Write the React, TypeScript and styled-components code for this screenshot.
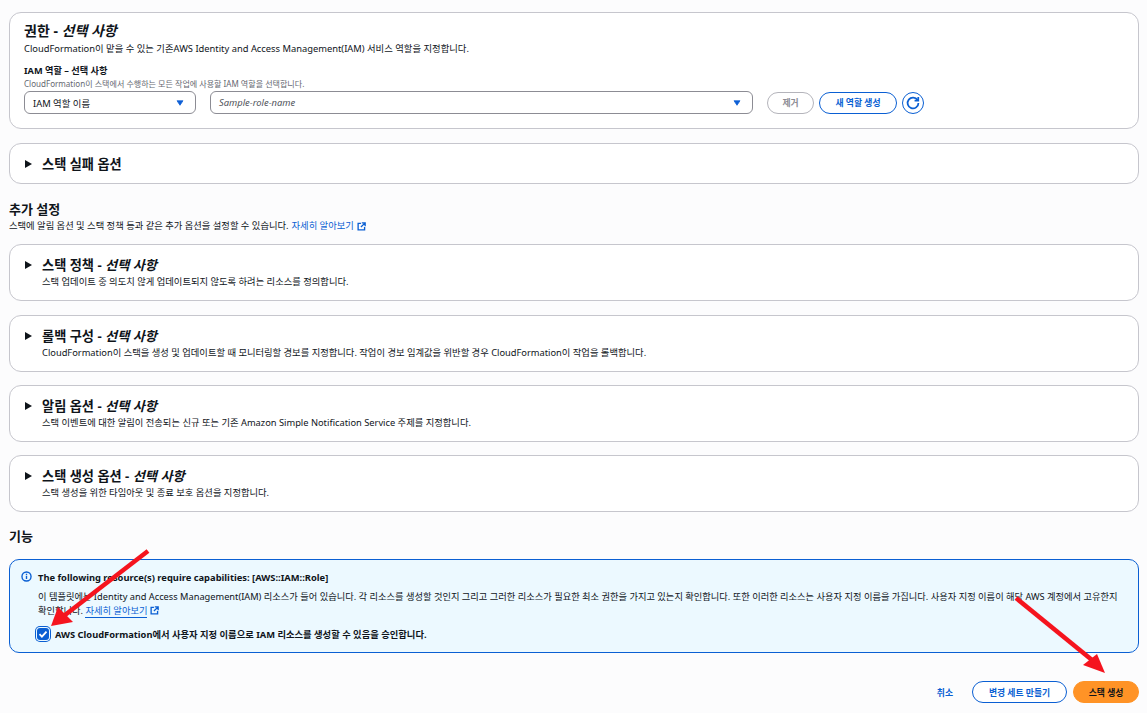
import { FunctionComponent } from "react";
import styled, { createGlobalStyle } from "styled-components";

const GlobalStyle = createGlobalStyle`
  html, body {
    margin: 0;
    padding: 0;
    background: #fcfcfd;
  }
  body {
    color: #0f141a;
    font-family: "Noto Sans", "Noto Sans CJK KR", sans-serif;
    font-size: 10px;
  }
`;

const Caret: FunctionComponent = () => (
  <CaretIcon viewBox="0 0 10 8">
    <path d="M1 1h8L5 7z" fill="#0d5fd6" stroke="#0d5fd6" strokeLinejoin="round" />
  </CaretIcon>
);

const ExternalIcon: FunctionComponent = () => (
  <LinkIcon viewBox="0 0 16 16" fill="none" stroke="#0a5fd3" strokeWidth="2.4">
    <path d="M7 2.5H2v11.5h11.5V9" />
    <path d="M8.5 1.5h6v6M14 2l-7 7" />
  </LinkIcon>
);

const ExpandRow: FunctionComponent<{
  title: string;
  description: string;
}> = ({ title, description }) => (
  <ExpandCard>
    <Triangle />
    <div>
      <ExpandTitle>
        {title} - <em>선택 사항</em>
      </ExpandTitle>
      <ExpandText>{description}</ExpandText>
    </div>
  </ExpandCard>
);

const App: FunctionComponent = () => (
  <Page>
    <GlobalStyle />
    <Card>
      <CardTitle>
        권한 - <em>선택 사항</em>
      </CardTitle>
      <CardText>
        CloudFormation이 맡을 수 있는 기존AWS Identity and Access Management(IAM) 서비스 역할을 지정합니다.
      </CardText>
      <FieldLabel>IAM 역할 – 선택 사항</FieldLabel>
      <FieldHint>CloudFormation이 스택에서 수행하는 모든 작업에 사용할 IAM 역할을 선택합니다.</FieldHint>
      <FieldRow>
        <SelectBox $width={172}>
          IAM 역할 이름
          <Caret />
        </SelectBox>
        <SelectBox $width={543} $placeholder>
          Sample-role-name
          <Caret />
        </SelectBox>
        <Buttons>
          <PillButton $variant="disabled" $width={47}>제거</PillButton>
          <PillButton $variant="normal" $width={78}>새 역할 생성</PillButton>
          <RefreshButton>
            <svg width="14" height="14" viewBox="0 0 16 16" fill="none" stroke="#0a5fd3" strokeWidth="2">
              <path d="M13.2 4.6A6.2 6.2 0 1 0 14.2 8" />
              <path d="M14 1v4.2H9.8" />
            </svg>
          </RefreshButton>
        </Buttons>
      </FieldRow>
    </Card>

    <FailureCard>
      <Triangle />
      <ExpandTitle>스택 실패 옵션</ExpandTitle>
    </FailureCard>

    <SectionHead>
      <SectionTitle>추가 설정</SectionTitle>
      <SectionText>
        스택에 알림 옵션 및 스택 정책 등과 같은 추가 옵션을 설정할 수 있습니다. <InlineLink>자세히 알아보기</InlineLink> <ExternalIcon />
      </SectionText>
    </SectionHead>

    <ExpandList>
      <ExpandRow title="스택 정책" description="스택 업데이트 중 의도치 않게 업데이트되지 않도록 하려는 리소스를 정의합니다." />
      <ExpandRow
        title="롤백 구성"
        description="CloudFormation이 스택을 생성 및 업데이트할 때 모니터링할 경보를 지정합니다. 작업이 경보 임계값을 위반할 경우 CloudFormation이 작업을 롤백합니다."
      />
      <ExpandRow
        title="알림 옵션"
        description="스택 이벤트에 대한 알림이 전송되는 신규 또는 기존 Amazon Simple Notification Service 주제를 지정합니다."
      />
      <ExpandRow title="스택 생성 옵션" description="스택 생성을 위한 타임아웃 및 종료 보호 옵션을 지정합니다." />
    </ExpandList>

    <CapabilityTitle>기능</CapabilityTitle>

    <Alert>
      <InfoIcon viewBox="0 0 16 16" fill="none" stroke="#0a5fd3" strokeWidth="2">
        <circle cx="8" cy="8" r="6.6" />
        <path d="M8 7v4.5M8 4v1.8" />
      </InfoIcon>
      <AlertBody>
        <AlertTitle>The following resource(s) require capabilities: [AWS::IAM::Role]</AlertTitle>
        <AlertText>
          이 템플릿에는 Identity and Access Management(IAM) 리소스가 들어 있습니다. 각 리소스를 생성할 것인지 그리고 그러한 리소스가 필요한 최소 권한을 가지고 있는지 확인합니다. 또한 이러한 리소스는 사용자 지정 이름을 가집니다. 사용자 지정 이름이 해당 AWS 계정에서 고유한지 확인합니다. <UnderLink>자세히 알아보기</UnderLink> <ExternalIcon />
        </AlertText>
        <CheckRow>
          <CheckBox>
            <svg width="10" height="10" viewBox="0 0 10 10" fill="none" stroke="#fff" strokeWidth="1.8">
              <path d="M1.5 5.2l2.4 2.4 4.6-5" />
            </svg>
          </CheckBox>
          AWS CloudFormation에서 사용자 지정 이름으로 IAM 리소스를 생성할 수 있음을 승인합니다.
        </CheckRow>
      </AlertBody>
    </Alert>

    <Footer>
      <CancelLink>취소</CancelLink>
      <PillButton $variant="normal" $width={95}>변경 세트 만들기</PillButton>
      <PillButton $variant="primary" $width={66}>스택 생성</PillButton>
    </Footer>

    <ArrowLayer viewBox="0 0 1147 713">
      <path d="M148 551L65 615" stroke="#f5141e" strokeWidth="4.5" />
      <path d="M51 626L73 622L58 607Z" fill="#f5141e" />
      <path d="M1016 598L1092 660" stroke="#f5141e" strokeWidth="4.5" />
      <path d="M1105 673L1083 665L1097 654Z" fill="#f5141e" />
    </ArrowLayer>
  </Page>
);

export default App;

const Page = styled.div`
  box-sizing: border-box;
  height: 713px;
  overflow: hidden;
  padding: 12px 8px 0 9px;
  position: relative;
  width: 1147px;
`;

const Card = styled.section`
  background: #fff;
  border: 1px solid #c6c6cd;
  border-radius: 12px;
  box-sizing: border-box;
  height: 117px;
  padding: 9px 14px;
`;

const CardTitle = styled.h2`
  font-size: 14px;
  font-weight: 700;
  line-height: 18px;
  margin: 0;
`;

const CardText = styled.p`
  font-size: 9.35px;
  line-height: 14px;
  margin: 2px 0 0;
`;

const FieldLabel = styled.div`
  font-size: 9.2px;
  font-weight: 700;
  line-height: 13px;
  margin-top: 8px;
`;

const FieldHint = styled.div`
  color: #656871;
  font-size: 8.05px;
  line-height: 12px;
  margin-top: 1px;
`;

const FieldRow = styled.div`
  align-items: center;
  display: flex;
  gap: 14px;
  margin-top: 1px;
`;

const SelectBox = styled.div<{ $width: number; $placeholder?: boolean }>`
  align-items: center;
  background: #fff;
  border: 1px solid #8c8c94;
  border-radius: 6px;
  box-sizing: border-box;
  color: ${(p) => (p.$placeholder ? "#4f535b" : "#0f141a")};
  display: flex;
  font-size: 9.4px;
  font-style: ${(p) => (p.$placeholder ? "italic" : "normal")};
  height: 23px;
  justify-content: space-between;
  padding: 0 11px 0 8px;
  width: ${(p) => p.$width}px;
`;

const CaretIcon = styled.svg`
  height: 6px;
  width: 8px;
`;

const Buttons = styled.div`
  align-items: center;
  display: flex;
  gap: 5px;
`;

const PillButton = styled.button<{ $variant: "normal" | "disabled" | "primary"; $width: number }>`
  background: ${(p) => (p.$variant === "primary" ? "#ff9326" : "#fff")};
  border: ${(p) =>
    p.$variant === "primary"
      ? "1px solid #ff9326"
      : p.$variant === "disabled"
        ? "1px solid #b4b4bb"
        : "1px solid #0a5fd3"};
  border-radius: 12px;
  box-sizing: border-box;
  color: ${(p) => (p.$variant === "primary" ? "#0f141a" : p.$variant === "disabled" ? "#8c8c94" : "#0a5fd3")};
  font-family: inherit;
  font-size: 8.8px;
  font-weight: 700;
  height: 22px;
  padding: 0;
  width: ${(p) => p.$width}px;
`;

const RefreshButton = styled.button`
  align-items: center;
  background: #fff;
  border: 1px solid #0a5fd3;
  border-radius: 50%;
  box-sizing: border-box;
  display: flex;
  height: 22px;
  justify-content: center;
  padding: 0;
  width: 22px;
`;

const ExpandCard = styled.div`
  background: #fff;
  border: 1px solid #c6c6cd;
  border-radius: 12px;
  box-sizing: border-box;
  display: flex;
  gap: 10px;
  height: 57px;
  padding: 11px 15px;
`;

const FailureCard = styled(ExpandCard)`
  align-items: center;
  height: 41px;
  margin-top: 14px;
  padding: 0 15px;
`;

const Triangle = styled.span`
  border-bottom: 4px solid transparent;
  border-left: 7px solid #0f141a;
  border-top: 4px solid transparent;
  flex: none;
  height: 0;
  margin-top: 5px;
  width: 0;
  ${FailureCard} & {
    margin-top: 0;
  }
`;

const ExpandTitle = styled.div`
  font-size: 13.2px;
  font-weight: 700;
  line-height: 18px;
`;

const ExpandText = styled.div`
  font-size: 9.3px;
  line-height: 14px;
  margin-top: 1px;
`;

const SectionHead = styled.div`
  margin-top: 16px;
`;

const SectionTitle = styled.h2`
  font-size: 13px;
  font-weight: 700;
  line-height: 18px;
  margin: 0;
`;

const SectionText = styled.p`
  align-items: center;
  display: flex;
  font-size: 9.3px;
  gap: 3px;
  line-height: 14px;
  margin: 1px 0 0;
`;

const InlineLink = styled.span`
  color: #0a5fd3;
`;

const UnderLink = styled.span`
  border-bottom: 1px solid #0a5fd3;
  color: #0a5fd3;
`;

const LinkIcon = styled.svg`
  display: inline-block;
  height: 9px;
  vertical-align: -1px;
  width: 9px;
`;

const ExpandList = styled.div`
  display: flex;
  flex-direction: column;
  gap: 13.35px;
  margin-top: 11.4px;
`;

const CapabilityTitle = styled(SectionTitle)`
  margin-top: 15px;
`;

const Alert = styled.div`
  background: #ecf9ff;
  border: 1px solid #0a5fd3;
  border-radius: 10px;
  box-sizing: border-box;
  display: flex;
  gap: 6px;
  height: 94px;
  margin-top: 14px;
  padding: 11px 11px;
`;

const InfoIcon = styled.svg`
  flex: none;
  height: 11px;
  width: 11px;
`;

const AlertBody = styled.div`
  flex: 1;
  min-width: 0;
`;

const AlertTitle = styled.div`
  font-size: 9.35px;
  font-weight: 700;
  line-height: 14px;
`;

const AlertText = styled.p`
  font-size: 9.25px;
  line-height: 14px;
  margin: 5px 0 0;
`;

const CheckRow = styled.div`
  align-items: center;
  display: flex;
  font-size: 9.3px;
  font-weight: 700;
  gap: 4px;
  margin-top: 8px;
`;

const CheckBox = styled.span`
  align-items: center;
  background: #0a5fd3;
  border-radius: 3px;
  box-shadow: 0 0 0 1px #ecf9ff, 0 0 0 2px #0a5fd3;
  display: flex;
  height: 12px;
  justify-content: center;
  margin: 2px 2px 2px -1px;
  width: 12px;
`;

const Footer = styled.div`
  align-items: center;
  display: flex;
  gap: 6px;
  justify-content: flex-end;
  margin-top: 28px;
`;

const CancelLink = styled.span`
  color: #0a5fd3;
  font-size: 8.8px;
  font-weight: 700;
  margin-right: 13px;
`;

const ArrowLayer = styled.svg`
  height: 713px;
  left: 0;
  pointer-events: none;
  position: absolute;
  top: 0;
  width: 1147px;
`;
